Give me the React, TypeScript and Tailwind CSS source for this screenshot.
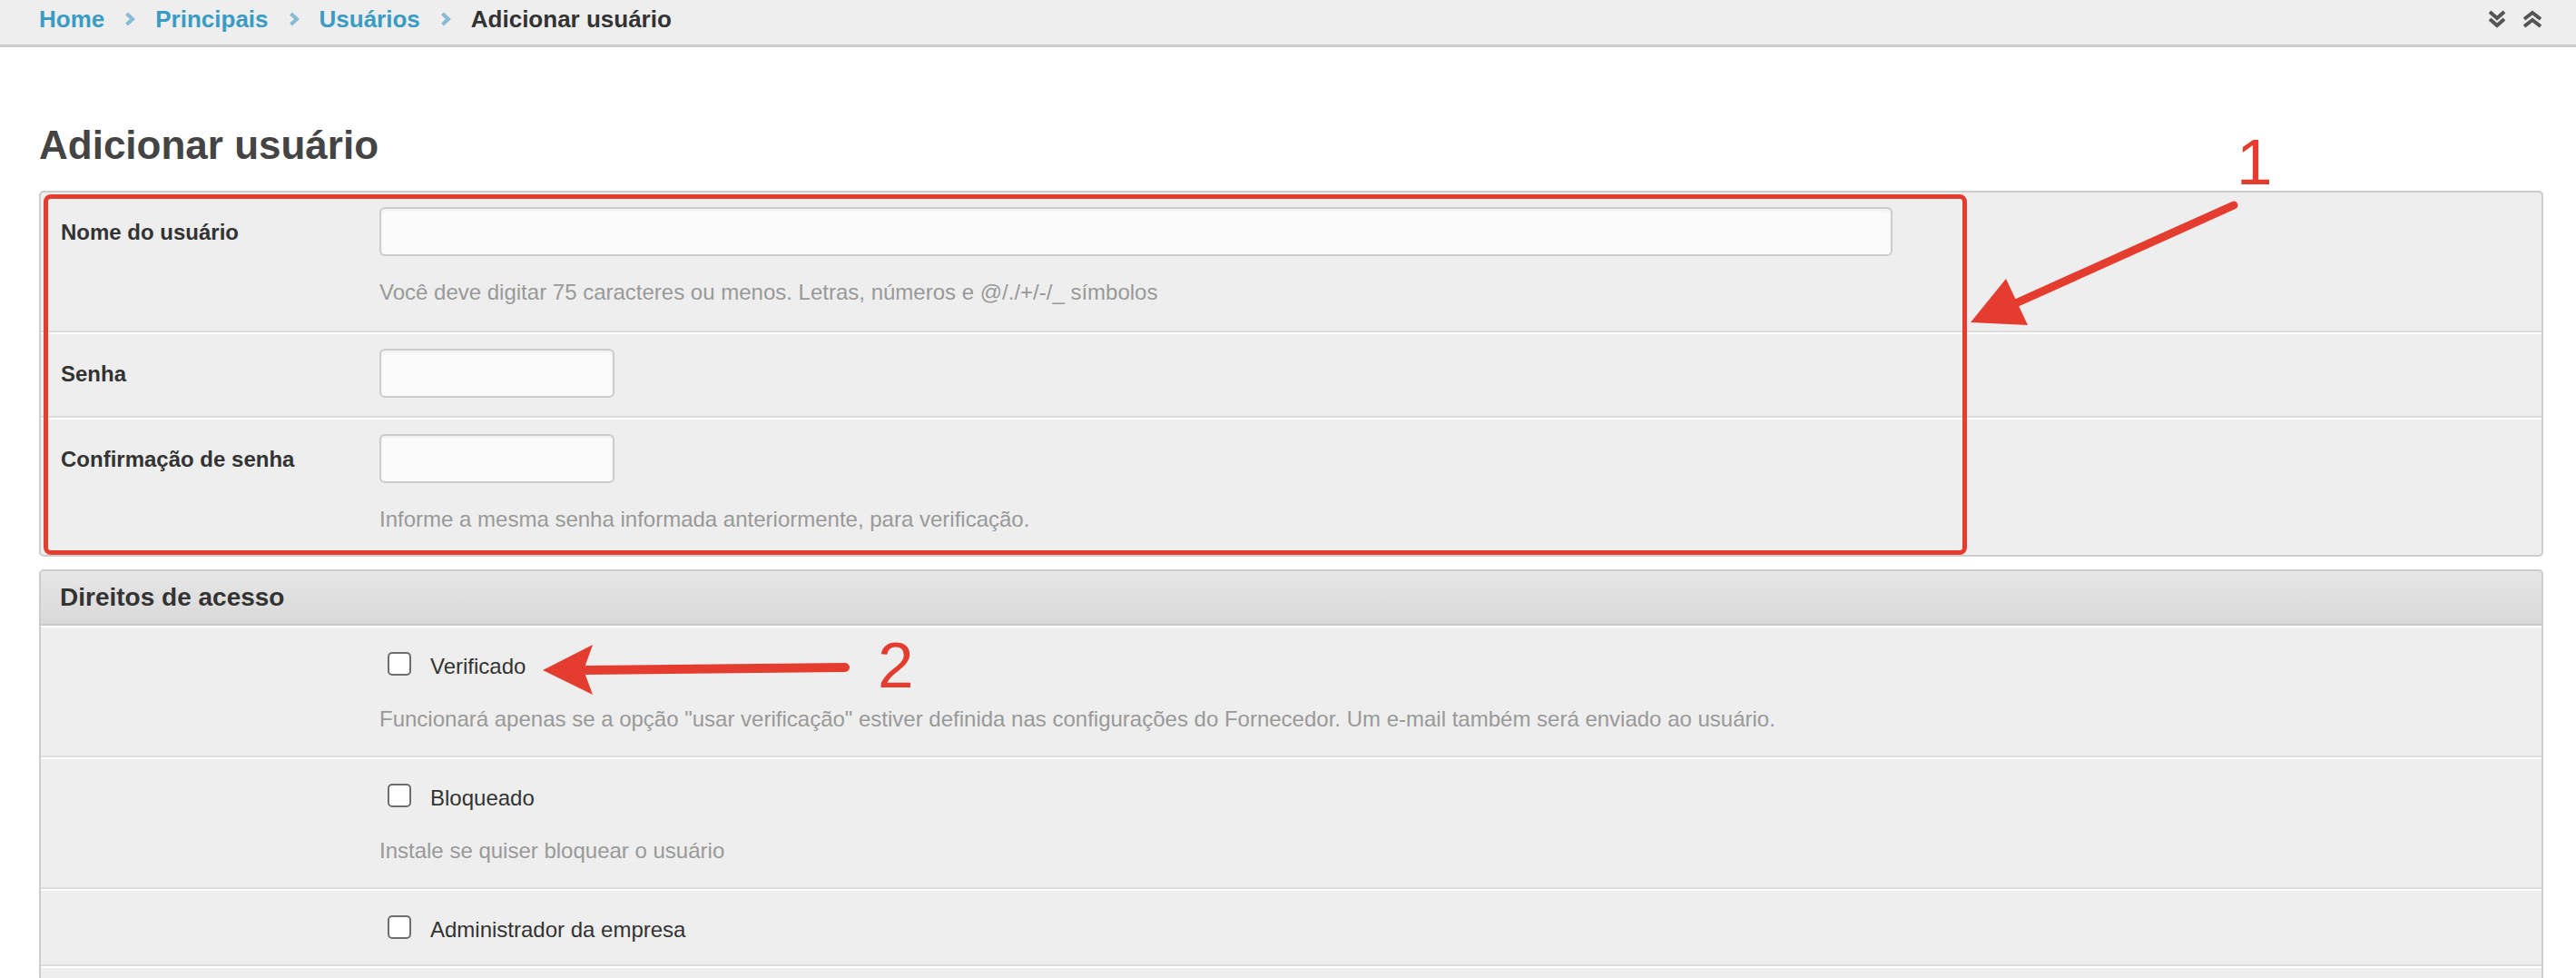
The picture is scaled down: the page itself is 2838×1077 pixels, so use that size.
import React from "react";

const Sep = () => (
  <svg width="12" height="16" viewBox="0 0 12 16" className="mx-[22px] shrink-0">
    <path d="M2.5 2 L9 8 L2.5 14" fill="none" stroke="#86bcd4" strokeWidth="4" />
  </svg>
);

const DoubleDown = () => (
  <svg width="22" height="22" viewBox="0 0 22 22">
    <path d="M3 3 L11 10 L19 3 M3 11 L11 18 L19 11" fill="none" stroke="#555" strokeWidth="4" />
  </svg>
);

const DoubleUp = () => (
  <svg width="24" height="22" viewBox="0 0 24 22">
    <path d="M3 11 L12 4 L21 11 M3 19 L12 12 L21 19" fill="none" stroke="#555" strokeWidth="4" />
  </svg>
);

const TextInput = ({ w }: { w: string }) => (
  <input
    type="text"
    className={`block ${w} h-[54px] rounded-[6px] border-2 border-[#cccccc] bg-[#fbfbfb] shadow-[inset_0_2px_3px_rgba(0,0,0,0.05)] outline-none`}
  />
);

const Check = ({ label }: { label: string }) => (
  <div className="flex items-center h-[36px]">
    <span className="ml-[9px] w-[26px] h-[26px] rounded-[5px] border-2 border-[#6e6e6e] bg-white shrink-0" />
    <span className="ml-[21px] text-[24px] leading-[28px] text-[#333333] mt-[5px]">{label}</span>
  </div>
);

export default function App() {
  return (
    <div className="relative w-full min-h-screen bg-white font-['Liberation_Sans',Arial,sans-serif]">
      {/* Breadcrumb bar */}
      <div className="flex justify-between h-[52px] bg-[#eeeeee] border-b-[3px] border-[#cccccc] pl-[43px] pr-[36px]">
        <div className="flex items-center h-[30px] mt-[6px] text-[26px] leading-[30px] font-bold">
          <span className="text-[#3a9cc4]">Home</span>
          <Sep />
          <span className="text-[#3a9cc4]">Principais</span>
          <Sep />
          <span className="text-[#3a9cc4]">Usuários</span>
          <Sep />
          <span className="text-[#333333]">Adicionar usuário</span>
        </div>
        <div className="flex gap-[16px] mt-[10px] h-[22px]">
          <DoubleDown />
          <DoubleUp />
        </div>
      </div>

      <div className="pl-[43px] pr-[36px]">
        <h1 className="mt-[82px] text-[44px] leading-[52px] font-bold text-[#444444]">Adicionar usuário</h1>

        {/* Main fieldset */}
        <div className="mt-[24px] rounded-[5px] border-2 border-[#cccccc] bg-[#eeeeee]">
          <div className="flex pl-[22px] pt-[16px] pb-[28px] border-b-2 border-[#dcdcdc]">
            <div className="w-[351px] shrink-0 pt-[14px] text-[24px] leading-[28px] font-bold text-[#333333]">Nome do usuário</div>
            <div>
              <TextInput w="w-[1667px]" />
              <p className="mt-[26px] text-[24px] leading-[28px] text-[#999999]">
                Você deve digitar 75 caracteres ou menos. Letras, números e @/./+/-/_ símbolos
              </p>
            </div>
          </div>
          <div className="flex pl-[22px] pt-[16px] pb-[20px] border-t-2 border-t-white border-b-2 border-b-[#dcdcdc]">
            <div className="w-[351px] shrink-0 pt-[14px] text-[24px] leading-[28px] font-bold text-[#333333]">Senha</div>
            <div>
              <TextInput w="w-[259px]" />
            </div>
          </div>
          <div className="flex pl-[22px] pt-[16px] pb-[25px] border-t-2 border-t-white">
            <div className="w-[351px] shrink-0 pt-[14px] text-[24px] leading-[28px] font-bold text-[#333333]">Confirmação de senha</div>
            <div>
              <TextInput w="w-[259px]" />
              <p className="mt-[26px] text-[24px] leading-[28px] text-[#999999]">
                Informe a mesma senha informada anteriormente, para verificação.
              </p>
            </div>
          </div>
        </div>

        {/* Access rights */}
        <div className="mt-[14px] rounded-t-[5px] border-2 border-[#cccccc] bg-[#eeeeee]">
          <div className="pl-[21px] pt-[13px] pb-[13px] bg-gradient-to-b from-[#e6e6e6] to-[#d9d9d9] border-b-2 border-[#c9c9c9] text-[28px] leading-[32px] font-bold text-[#333333] rounded-t-[4px]">
            Direitos de acesso
          </div>
          <div className="flex pl-[22px] pt-[22px] pb-[26px] border-t-2 border-t-white border-b-2 border-b-[#dcdcdc]">
            <div className="w-[351px] shrink-0" />
            <div>
              <Check label="Verificado" />
              <p className="mt-[29px] text-[24px] leading-[28px] text-[#999999]">
                Funcionará apenas se a opção "usar verificação" estiver definida nas configurações do Fornecedor. Um e-mail também será enviado ao usuário.
              </p>
            </div>
          </div>
          <div className="flex pl-[22px] pt-[22px] pb-[26px] border-t-2 border-t-white border-b-2 border-b-[#dcdcdc]">
            <div className="w-[351px] shrink-0" />
            <div>
              <Check label="Bloqueado" />
              <p className="mt-[29px] text-[24px] leading-[28px] text-[#999999]">Instale se quiser bloquear o usuário</p>
            </div>
          </div>
          <div className="flex pl-[22px] pt-[22px] pb-[23px] border-t-2 border-t-white border-b-2 border-b-[#dcdcdc]">
            <div className="w-[351px] shrink-0" />
            <div>
              <Check label="Administrador da empresa" />
            </div>
          </div>
          <div className="h-[81px] border-t-2 border-t-white" />
        </div>
      </div>

      {/* Annotations overlay */}
      <div className="absolute left-[48px] top-[214px] w-[2119px] h-[397px] border-[5px] border-[#e53c30] rounded-[8px] pointer-events-none" />
      <svg
        className="absolute left-0 top-0 pointer-events-none"
        width="2838"
        height="1077"
        viewBox="0 0 2838 1077"
      >
        <line x1="2461" y1="226" x2="2214" y2="337" stroke="#e53c30" strokeWidth="9" strokeLinecap="round" />
        <polygon points="2171,355 2210,307 2234,358" fill="#e53c30" />
        <text x="2464" y="203" fontSize="71" fill="#e53c30" fontFamily="Liberation Sans, Arial, sans-serif">1</text>

        <line x1="931" y1="735" x2="646" y2="738" stroke="#e53c30" strokeWidth="10" strokeLinecap="round" />
        <polygon points="598,738 653,710 643,738 653,765" fill="#e53c30" />
        <text x="967" y="757" fontSize="71" fill="#e53c30" fontFamily="Liberation Sans, Arial, sans-serif">2</text>
      </svg>
    </div>
  );
}
